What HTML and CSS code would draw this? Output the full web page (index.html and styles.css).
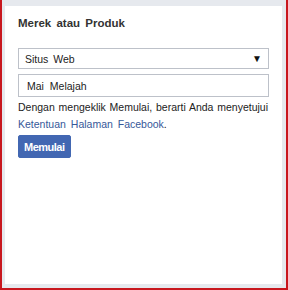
FILE: index.html
```html
<!DOCTYPE html>
<html lang="id">
<head>
    <meta charset="UTF-8">
    <title>Merek atau Produk</title>
    <link rel="stylesheet" href="styles.css">
</head>
<body>
    <div class="frame">
        <div class="panel">
            <h2 class="title">Merek atau Produk</h2>
            <div class="select">
                <span>Situs Web</span>
                <span class="arrow">&#9660;</span>
            </div>
            <div class="field">Mai Melajah</div>
            <p class="terms">Dengan mengeklik Memulai, berarti Anda menyetujui <a href="#">Ketentuan Halaman Facebook</a>.</p>
            <button class="start">Memulai</button>
        </div>
    </div>
</body>
</html>
```

FILE: styles.css
```css
html, body {
    margin: 0;
    height: 100%;
}

body {
    font-family: 'Liberation Sans', Arial, sans-serif;
    font-size: 10.5px;
    color: #1d2129;
}

.frame {
    box-sizing: border-box;
    height: 290px;
    border: 2px solid #c8171e;
    border-top: 0;
    background: #e6e9ee;
    padding: 6px 4px 4px 3px;
}

.panel {
    box-sizing: border-box;
    height: 100%;
    background: #fff;
    padding: 10px 13px 0 13px;
}

.title {
    margin: 0 0 17px;
    font-size: 11.5px;
    font-weight: bold;
    color: #333;
    word-spacing: 2px;
    line-height: 15px;
}

.select {
    box-sizing: border-box;
    height: 21px;
    width: 251px;
    border: 1px solid #bdc1c9;
    display: flex;
    align-items: center;
    justify-content: space-between;
    padding: 0 6px 0 6px;
    word-spacing: 2px;
    color: #222;
}

.arrow {
    font-size: 10px;
    color: #111;
}

.field {
    box-sizing: border-box;
    height: 23px;
    width: 251px;
    margin-top: 5px;
    border: 1px solid #bdc1c9;
    display: flex;
    align-items: center;
    padding-left: 8px;
    word-spacing: 3px;
    color: #222;
}

.terms {
    margin: 2px 0 0;
    width: 250px;
    line-height: 17px;
    text-align: justify;
    color: #222;
}

.terms a {
    color: #365899;
    text-decoration: none;
    word-spacing: 2px;
}

.start {
    margin-top: 2px;
    height: 23px;
    padding: 0 5px;
    border: 1px solid #4267b2;
    border-radius: 2px;
    background: #4267b2;
    color: #fff;
    font-family: inherit;
    font-size: 11px;
    font-weight: bold;
    letter-spacing: -0.5px;
}
```
